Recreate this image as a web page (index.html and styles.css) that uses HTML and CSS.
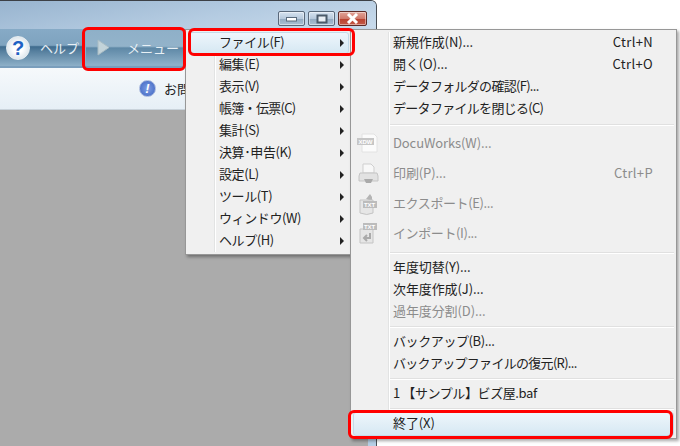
FILE: index.html
```html
<!DOCTYPE html>
<html lang="ja">
<head>
<meta charset="utf-8">
<title>メニュー</title>
<link rel="stylesheet" href="styles.css">
</head>
<body>
<div class="window">
  <div class="titlebar">
    <div class="caption">
      <div class="capbtn"><svg width="13" height="6" viewBox="0 0 13 6"><rect x="1.500" y="1.500" width="10" height="3.500" fill="#fff" stroke="#5a6b7d"/></svg></div>
      <div class="capbtn"><svg width="12" height="10" viewBox="0 0 12 10"><rect x="1.500" y="1.500" width="9" height="7" fill="#e8eef4" stroke="#4a5a6a" stroke-width="2"/></svg></div>
      <div class="capbtn close"><svg width="15" height="11" viewBox="0 0 15 11"><path d="M3 1l9 9M12 1l-9 9" fill="none" stroke="#fff" stroke-width="3"/></svg></div>
    </div>
  </div>
  <div class="toolbar">
    <div class="helpicon">?</div>
    <span class="toollabel help">ヘルプ</span>
    <div class="menubtn">
      <svg class="play" width="14" height="17" viewBox="0 0 14 17"><path d="M1 1l11 7.500L1 16z" fill="#c3d3d9" stroke="#a9bcc4"/></svg>
      <span class="toollabel">メニュー</span>
    </div>
  </div>
  <div class="subbar">
    <div class="info">!</div>
    <span class="inquiry">お問</span>
  </div>
  <div class="content"></div>
</div>

<div class="menu menu-main">
  <div class="gutter"></div>
  <div class="item sel"><span class="tight">ファイル(F)</span><i class="arrow"></i></div>
  <div class="item"><span class="tight">編集(E)</span><i class="arrow"></i></div>
  <div class="item"><span class="tight">表示(V)</span><i class="arrow"></i></div>
  <div class="item"><span class="tighter">帳簿・伝票(C)</span><i class="arrow"></i></div>
  <div class="item"><span class="tight">集計(S)</span><i class="arrow"></i></div>
  <div class="item"><span class="tight">決算･申告(K)</span><i class="arrow"></i></div>
  <div class="item"><span class="tight">設定(L)</span><i class="arrow"></i></div>
  <div class="item"><span class="tight">ツール(T)</span><i class="arrow"></i></div>
  <div class="item"><span class="tight">ウィンドウ(W)</span><i class="arrow"></i></div>
  <div class="item"><span class="tight">ヘルプ(H)</span><i class="arrow"></i></div>
</div>

<div class="menu menu-file">
  <div class="gutter"></div>
  <div class="item"><span>新規作成(N)...</span><kbd>Ctrl+N</kbd></div>
  <div class="item"><span>開く(O)...</span><kbd>Ctrl+O</kbd></div>
  <div class="item"><span class="tighter">データフォルダの確認(F)...</span></div>
  <div class="item"><span class="tighter">データファイルを閉じる(C)</span></div>
  <div class="sep sep-a"></div>
  <div class="item tall off">
    <svg class="ico" width="24" height="22" viewBox="0 0 24 22"><path d="M6 2h12l3 3v15H6z" fill="#fbfbfb" stroke="#e2e2e2"/><rect x="1" y="6" width="17" height="7" fill="#c6c6c6"/><text x="2.500" y="12" class="icotxt">XDW</text></svg>
    <span>DocuWorks(W)...</span>
  </div>
  <div class="item tall off">
    <svg class="ico" width="24" height="24" viewBox="0 0 24 24"><path d="M7 2h8l3 3v6H7z" fill="#f8f8f8" stroke="#cfcfcf"/><path d="M4 11h17l1 3v5H3v-5z" fill="#e2e2e2" stroke="#c4c4c4"/><path d="M8 17h9l-2 4h-5z" fill="#aaa"/></svg>
    <span>印刷(P)...</span><kbd>Ctrl+P</kbd>
  </div>
  <div class="item tall off">
    <svg class="ico" width="24" height="24" viewBox="0 0 24 24"><path d="M10 7l4-5 2 3v4z" fill="#b4b4b4"/><path d="M4 8h13v13q-6 3-13 0z" fill="#e6e6e6" stroke="#c4c4c4"/><rect x="7" y="9" width="14" height="7" fill="#bcbcbc"/><text x="8" y="15" class="icotxt">TXT</text></svg>
    <span class="tight">エクスポート(E)...</span>
  </div>
  <div class="item tall off">
    <svg class="ico" width="24" height="24" viewBox="0 0 24 24"><path d="M4 7h13v14H4z" fill="#e6e6e6" stroke="#c4c4c4"/><rect x="7" y="1" width="14" height="7" fill="#bcbcbc"/><text x="8" y="7" class="icotxt">TXT</text><path d="M14 11v5H8m3-3l-3 3 3 3" fill="none" stroke="#aaa" stroke-width="2"/></svg>
    <span class="tight">インポート(I)...</span>
  </div>
  <div class="sep"></div>
  <div class="item"><span>年度切替(Y)...</span></div>
  <div class="item"><span>次年度作成(J)...</span></div>
  <div class="item off"><span>過年度分割(D)...</span></div>
  <div class="sep"></div>
  <div class="item"><span class="tight">バックアップ(B)...</span></div>
  <div class="item"><span class="tighter">バックアップファイルの復元(R)...</span></div>
  <div class="sep"></div>
  <div class="item"><span class="tight">1 【サンプル】ビズ屋.baf</span></div>
  <div class="sep sep-c"></div>
  <div class="item sel last"><span>終了(X)</span></div>
</div>

<div class="mark mark-menu"></div>
<div class="mark mark-file"></div>
<div class="mark mark-exit"></div>
</body>
</html>
```
FILE: styles.css
```css
html, body {
  margin: 0;
  padding: 0;
  width: 680px;
  height: 446px;
  overflow: hidden;
  background: #fff;
  font-family: "Noto Sans CJK JP", "Noto Sans", sans-serif;
  font-size: 13px;
  color: #222;
}
.window {
  width: 377px;
  height: 446px;
  display: flex;
  flex-direction: column;
  border-right: 1px solid #4a4f55;
  border-top: 1px solid #3c4046;
  border-top-right-radius: 6px;
  box-sizing: border-box;
  overflow: hidden;
  background: #b6cfe6;
}
.titlebar {
  height: 28px;
  flex: none;
  display: flex;
  justify-content: flex-end;
  background: linear-gradient(170deg, #98b4cf 0%, #b4cbe1 55%, #c9dbec 100%);
  padding-right: 9px;
  box-sizing: border-box;
}
.caption { display: flex; gap: 3px; padding-top: 10px; }
.capbtn {
  width: 27px;
  height: 15px;
  box-sizing: border-box;
  border: 1px solid #59687a;
  border-radius: 2px;
  background: linear-gradient(#d6e3f0 0%, #b7c9dc 50%, #92a9c0 52%, #a9bfd4 100%);
  display: flex;
  align-items: center;
  justify-content: center;
  box-shadow: inset 0 0 0 1px rgba(255,255,255,.45);
}
.capbtn.close {
  width: 29px;
  border-color: #5e2a26;
  background: linear-gradient(#e2a498 0%, #d07a6c 50%, #b9402e 52%, #c45a48 100%);
}
.toolbar {
  height: 39px;
  flex: none;
  display: flex;
  align-items: center;
  background: linear-gradient(#86aac6 0%, #7ea3bf 44%, #3f6c8e 48%, #567f9e 60%, #8eb0c8 100%);
  border-bottom: 2px solid #7a9ebc;
  box-sizing: border-box;
}
.helpicon {
  width: 24px;
  height: 24px;
  box-sizing: border-box;
  margin-left: 6px;
  border-radius: 50%;
  border: 1px solid #e8eef2;
  background: radial-gradient(#ffffff 30%, #c8d6e0 100%);
  color: #1f62c4;
  font: bold 20px/22px "Liberation Sans", sans-serif;
  text-align: center;
  flex: none;
}
.toollabel {
  color: #e8f0f5;
  font-size: 13px;
  white-space: nowrap;
}
.toollabel.help { margin-left: 10px; }
.menubtn {
  margin-left: 6px;
  width: 99px;
  height: 36px;
  display: flex;
  align-items: center;
  box-sizing: border-box;
  padding-left: 11px;
  border: 1px solid #8cb0c8;
  border-radius: 2px;
  background: linear-gradient(#8fb0c8 0%, #93b3ca 45%, #5e88a6 50%, #8fb1c9 100%);
}
.menubtn .toollabel { margin-left: 16px; }
.play { flex: none; }
.subbar {
  height: 42px;
  flex: none;
  display: flex;
  align-items: center;
  box-sizing: border-box;
  padding: 0 0 0 139px;
  background: linear-gradient(#f6f9fb, #e6eff6);
  border-bottom: 1px solid #c9d3db;
  white-space: nowrap;
}
.info {
  width: 15px;
  height: 15px;
  border-radius: 50%;
  background: radial-gradient(#7f9fe4, #3c62c0);
  border: 1px solid #a5b6dd;
  color: #fff;
  font: italic bold 13px/15px "Liberation Sans", sans-serif;
  text-align: center;
  flex: none;
}
.inquiry { margin-left: 8px; color: #222; }
.content { flex: 1; background: #ababab; margin-right: 8px; }

.menu {
  position: absolute;
  top: 29px;
  background: #f0f0f0;
  border: 1px solid #979797;
  box-sizing: border-box;
  padding: 2px;
  box-shadow: 2px 2px 3px rgba(0,0,0,.35);
  letter-spacing: -0.1px;
}
.menu-main { left: 185px; width: 167px; height: 226px; }
.menu-file { left: 350px; width: 327px; height: 410px; }
.tight { letter-spacing: -0.4px; }
.tighter { letter-spacing: -0.7px; }
.gutter {
  position: absolute;
  top: 2px;
  bottom: 2px;
  width: 1px;
  background: #e2e3e3;
  border-right: 1px solid #fff;
}
.menu-main .gutter { left: 28px; }
.menu-file .gutter { left: 37px; }
.item {
  height: 22px;
  display: flex;
  align-items: center;
  position: relative;
  box-sizing: border-box;
  white-space: nowrap;
  line-height: 20px;
  padding-bottom: 2px;
}
.menu-main .item { padding-left: 31px; }
.menu-file .item { padding-left: 40px; }
.menu-file .item.tall { height: 30px; }
.item.off { color: #8c8c8c; }
.item.sel {
  background: linear-gradient(#eef6fb, #d6e8f3);
  border: 1px solid #c4dbe9;
  border-radius: 3px;
}
.menu-main .item.sel { padding-left: 30px; }
.menu-file .item.sel { padding-left: 39px; }
.item.last { height: 24px; }
.arrow {
  position: absolute;
  right: 5px;
  top: 7px;
  width: 0;
  height: 0;
  border-left: 4px solid #222;
  border-top: 4px solid transparent;
  border-bottom: 4px solid transparent;
}
.item.sel .arrow { right: 4px; top: 6px; }
kbd {
  font: inherit;
  letter-spacing: 0.35px;
  margin-left: auto;
  margin-right: 21px;
}
.ico {
  position: absolute;
  left: 3px;
  top: 3px;
}
.icotxt {
  font: bold 6px "Liberation Sans", sans-serif;
  fill: #fff;
}
.sep {
  height: 2px;
  margin: 3px 0 3px 35px;
  background: #e0e0e0;
  border-bottom: 1px solid #fff;
  box-sizing: border-box;
}
.sep-a { margin-top: 4px; }
.sep-c { margin-bottom: 2px; }

.mark {
  position: absolute;
  border: 3px solid #f00;
  border-radius: 6px;
  box-sizing: border-box;
}
.mark-menu { left: 82px; top: 27px; width: 104px; height: 44px; }
.mark-file { left: 188px; top: 28px; width: 167px; height: 28px; }
.mark-exit { left: 348px; top: 410px; width: 325px; height: 29px; }
```
